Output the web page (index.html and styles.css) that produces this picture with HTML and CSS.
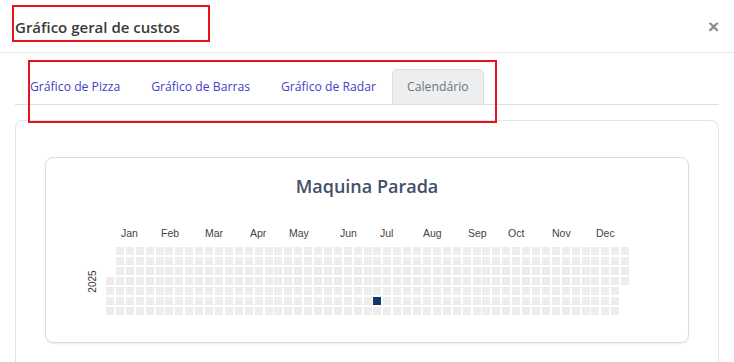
FILE: index.html
```html
<!DOCTYPE html>
<html lang="pt-BR">
<head>
    <meta charset="UTF-8">
    <meta name="viewport" content="width=device-width, initial-scale=1.0">
    <title>Gráfico geral de custos</title>
    <link rel="stylesheet" href="styles.css">
</head>
<body>
    <div class="modal">
        <!-- Header -->
        <div class="modal-header">
            <div class="mark mark-title">
                <h4 class="modal-title">Gráfico geral de custos</h4>
            </div>
            <button class="close" type="button">&times;</button>
        </div>

        <!-- Body -->
        <div class="modal-body">
            <div class="mark mark-tabs"></div>
            <ul class="nav-tabs">
                <li><a href="#" class="tab">Gráfico de Pizza</a></li>
                <li><a href="#" class="tab">Gráfico de Barras</a></li>
                <li><a href="#" class="tab">Gráfico de Radar</a></li>
                <li><a href="#" class="tab active">Calendário</a></li>
            </ul>

            <div class="card">
                <div class="chart-card">
                    <div class="chart-title">Maquina Parada</div>
                    <div class="calendar">
                        <div class="year-label"><span>2025</span></div>
                        <div class="cal-body">
                            <div class="months" id="months"></div>
                            <div class="days" id="days"></div>
                        </div>
                    </div>
                </div>
            </div>
        </div>
    </div>

    <script>
        // month labels (offset from grid start, as the chart draws them)
        const months = [
            ['Jan', 15], ['Feb', 55], ['Mar', 99], ['Apr', 144],
            ['May', 183], ['Jun', 234], ['Jul', 274], ['Aug', 317],
            ['Sep', 362], ['Oct', 402], ['Nov', 446], ['Dec', 490]
        ];
        const monthsEl = document.getElementById('months');
        months.forEach(([name, x]) => {
            const s = document.createElement('span');
            s.textContent = name;
            s.style.left = x + 'px';
            monthsEl.appendChild(s);
        });

        // days of 2025, weeks start on Sunday
        const data = { '2025-07-11': 1 };
        const daysEl = document.getElementById('days');
        const start = new Date(2025, 0, 1);
        for (let i = 0; i < start.getDay(); i++) {
            const pad = document.createElement('div');
            pad.className = 'day empty';
            daysEl.appendChild(pad);
        }
        for (let d = new Date(start); d.getFullYear() === 2025; d.setDate(d.getDate() + 1)) {
            const key = d.getFullYear() + '-' + String(d.getMonth() + 1).padStart(2, '0') + '-' + String(d.getDate()).padStart(2, '0');
            const cell = document.createElement('div');
            cell.className = data[key] ? 'day hit' : 'day';
            cell.title = key;
            daysEl.appendChild(cell);
        }
    </script>
</body>
</html>
```

FILE: styles.css
```css
body {
    margin: 0;
    padding: 0;
    font-family: "Open Sans", Arial, sans-serif;
    background-color: #fff;
    color: #333;
}
.modal {
    width: 734px;
    height: 362px;
    overflow: hidden;
}
.modal-header {
    display: flex;
    align-items: center;
    justify-content: space-between;
    height: 53px;
    padding: 0 15px 0 12px;
    border-bottom: 1px solid #e5e5e5;
    box-sizing: border-box;
}
.mark {
    border: 2px solid #e8141c;
    box-sizing: border-box;
}
.mark-title {
    width: 198px;
    height: 37px;
    padding: 10px 0 0 1px;
    align-self: flex-start;
    margin-top: 5px;
}
.modal-title {
    margin: 0;
    font-size: 15px;
    font-weight: 600;
    line-height: 20px;
    color: #3a3a3a;
}
.close {
    background: none;
    border: none;
    padding: 0;
    font-family: Arial, sans-serif;
    font-size: 19px;
    font-weight: bold;
    line-height: 1;
    color: #8a8a8a;
    cursor: pointer;
    margin-top: 0;
}
.modal-body {
    position: relative;
    padding: 16px 15px 15px;
}
.mark-tabs {
    position: absolute;
    left: 28px;
    top: 7px;
    width: 469px;
    height: 63px;
    z-index: 2;
    pointer-events: none;
}
.nav-tabs {
    display: flex;
    list-style: none;
    margin: 0;
    padding: 0;
    border-bottom: 1px solid #dcdfe3;
}
.nav-tabs li {
    margin-bottom: -1px;
    margin-right: 1px;
}
.tab {
    display: block;
    padding: 8px 14px;
    font-size: 12.2px;
    line-height: 18px;
    color: #4540c8;
    text-decoration: none;
    border: 1px solid transparent;
    border-radius: 5px 5px 0 0;
}
.tab.active {
    background-color: #eceeef;
    border-color: #dddfe2;
    color: #6c757d;
}
.card {
    margin-top: 15px;
    padding: 36px 29px 40px;
    border: 1px solid #e2e4e7;
    border-radius: 8px;
}
.chart-card {
    padding: 16px 0 27px;
    border: 1px solid #dcdcdc;
    border-radius: 8px;
    box-shadow: 0 1px 2px rgba(0, 0, 0, 0.08);
}
.chart-title {
    text-align: center;
    font-size: 18px;
    font-weight: 600;
    line-height: 24px;
    color: #464e69;
}
.calendar {
    display: flex;
    align-items: flex-end;
    padding-left: 40px;
    margin-top: 28px;
    font-family: "Liberation Sans", Arial, sans-serif;
}
.year-label {
    width: 12px;
    height: 68px;
    margin-right: 8px;
    display: flex;
    align-items: center;
    justify-content: center;
}
.year-label span {
    transform: rotate(-90deg);
    font-size: 10px;
    color: #333;
    white-space: nowrap;
}
.months {
    position: relative;
    height: 14px;
    margin-bottom: 7px;
}
.months span {
    position: absolute;
    top: 0;
    font-size: 10.5px;
    line-height: 14px;
    color: #444;
}
.days {
    display: grid;
    grid-template-rows: repeat(7, 8px);
    grid-auto-flow: column;
    grid-auto-columns: 8px;
    column-gap: 1.92px;
    row-gap: 2px;
}
.day {
    background-color: #ededed;
}
.day.empty {
    background: none;
}
.day.hit {
    background-color: #0f386f;
}
```
